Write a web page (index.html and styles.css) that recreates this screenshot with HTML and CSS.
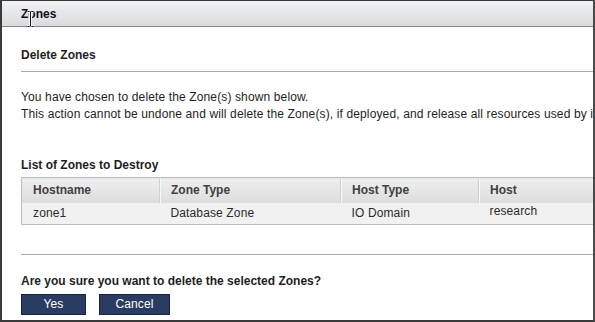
FILE: index.html
```html
<!DOCTYPE html>
<html>
<head>
    <title>Zones</title>
    <link rel="stylesheet" href="styles.css">
</head>
<body>
    <div class="dialog">
        <div class="titlebar">
            <span class="title">Zones</span>
            <!-- text cursor over the title -->
            <svg class="cursor" width="9" height="18" viewBox="0 0 9 18">
                <path d="M1.5 1.5h2M5.5 1.5h2M4.5 2v14M1.5 16.5h2M5.5 16.5h2" stroke="#fff" stroke-width="3" fill="none"/>
                <path d="M1.5 1.5h2M5.5 1.5h2M4.5 2v14M1.5 16.5h2M5.5 16.5h2" stroke="#111" stroke-width="1" fill="none"/>
            </svg>
        </div>
        <div class="content">
            <h3 class="section-title">Delete Zones</h3>
            <p class="message">
                You have chosen to delete the Zone(s) shown below.<br>
                This action cannot be undone and will delete the Zone(s), if deployed, and release all resources used by it.
            </p>
            <h4 class="list-title">List of Zones to Destroy</h4>
            <table class="zones">
                <thead>
                    <tr>
                        <th class="col-host">Hostname</th>
                        <th class="col-type">Zone Type</th>
                        <th class="col-htype">Host Type</th>
                        <th>Host</th>
                    </tr>
                </thead>
                <tbody>
                    <tr>
                        <td>zone1</td>
                        <td>Database Zone</td>
                        <td>IO Domain</td>
                        <td class="host">research</td>
                    </tr>
                </tbody>
            </table>
            <div class="confirm">
                <p class="question">Are you sure you want to delete the selected Zones?</p>
                <div class="actions">
                    <button class="btn btn-yes">Yes</button>
                    <button class="btn btn-cancel">Cancel</button>
                </div>
            </div>
        </div>
    </div>
</body>
</html>
```

FILE: styles.css
```css
:root {
    --frame: #3a3a3a;
    --rule: #a9a9a9;
    --text: #1e1e1e;
    --cell-text: #2a2a2a;
    --head-text: #404040;
    --table-border: #bcbcbc;
    --row-bg: #f1f1f1;
    --btn-bg: #2a3c62;
    --btn-border: #18243e;
}

html, body {
    margin: 0;
    padding: 0;
    background: #fff;
}

body {
    font-family: "Liberation Sans", Arial, sans-serif;
    font-size: 12px;
    color: var(--text);
}

.dialog {
    position: relative;
    box-sizing: border-box;
    width: 595px;
    height: 322px;
    border-top: 1px solid var(--frame);
    border-left: 2px solid var(--frame);
    border-right: 2px solid #4a4a4a;
    border-bottom: 2px solid var(--frame);
    overflow: hidden;
    white-space: nowrap;
}

.titlebar {
    height: 25px;
    padding-left: 19px;
    border-bottom: 1px solid #858585;
    background: linear-gradient(#f0f1f4, #dadbde);
    display: flex;
    align-items: center;
}

.title {
    font-weight: bold;
    font-size: 12px;
    color: #111;
    padding-top: 1px;
}

.cursor {
    position: absolute;
    left: 24px;
    top: 9px;
}

.content {
    padding-left: 19px;
}

.section-title {
    margin: 20px 0 0;
    font-size: 12px;
    line-height: 16px;
    padding-bottom: 8px;
    border-bottom: 1px solid var(--rule);
}

.message {
    margin: 17px 0 0;
    line-height: 17px;
    letter-spacing: 0.13px;
}

.list-title {
    margin: 34px 0 0;
    font-size: 12px;
    line-height: 16px;
}

table.zones {
    margin-top: 4px;
    width: 720px;
    border-collapse: collapse;
    border: 1px solid var(--table-border);
    table-layout: fixed;
}

.zones th {
    height: 25px;
    padding: 0 0 0 11px;
    box-sizing: border-box;
    text-align: left;
    font-weight: bold;
    color: var(--head-text);
    background: linear-gradient(#efefef, #dcdcdc);
    border-left: 1px solid #cfcfcf;
    box-shadow: inset 1px 0 0 #f8f8f8;
}

.zones th:first-child {
    border-left: none;
    box-shadow: none;
}

.col-host { width: 138px; }
.col-type { width: 181px; }
.col-htype { width: 138px; }

.zones td {
    height: 20px;
    padding: 0 0 0 11px;
    background: var(--row-bg);
    color: var(--cell-text);
    letter-spacing: 0.13px;
}

.zones td.host {
    vertical-align: top;
    padding-top: 1px;
}

.confirm {
    margin-top: 29px;
    border-top: 1px solid var(--rule);
}

.question {
    margin: 18px 0 0;
    font-weight: bold;
    line-height: 16px;
}

.actions {
    margin-top: 5px;
    display: flex;
    gap: 13px;
}

.btn {
    height: 21px;
    box-sizing: border-box;
    background-color: var(--btn-bg);
    border: 1px solid var(--btn-border);
    color: #fff;
    font-family: "Liberation Sans", Arial, sans-serif;
    font-size: 12px;
    letter-spacing: 0.13px;
    padding: 0;
    cursor: pointer;
}

.btn-yes { width: 65px; }
.btn-cancel { width: 71px; }
```
